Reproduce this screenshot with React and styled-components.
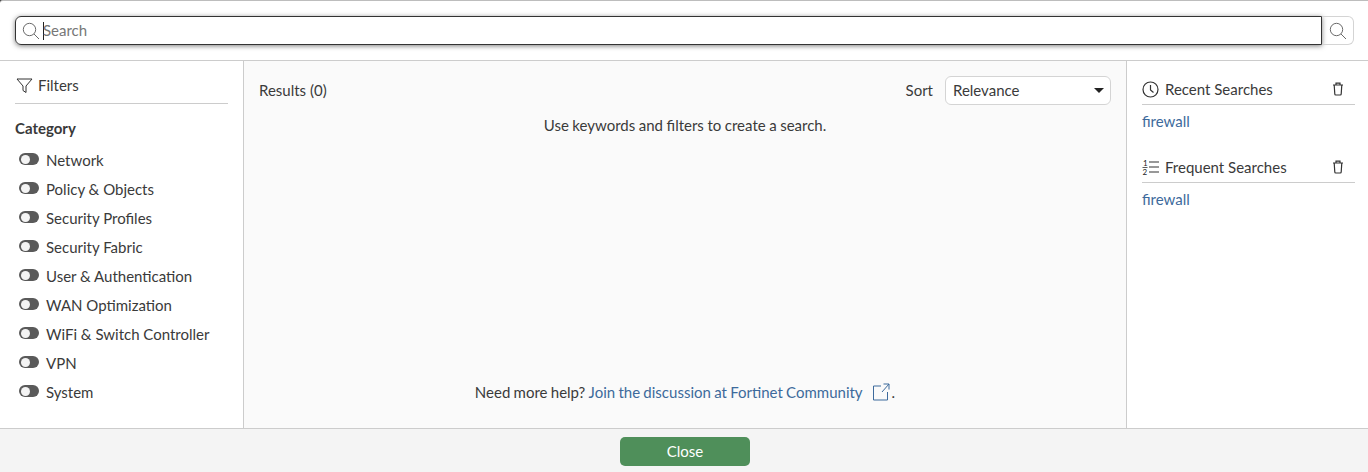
import React from "react";
import styled, { createGlobalStyle } from "styled-components";

const categories = [
  "Network",
  "Policy & Objects",
  "Security Profiles",
  "Security Fabric",
  "User & Authentication",
  "WAN Optimization",
  "WiFi & Switch Controller",
  "VPN",
  "System",
];

const SearchIcon = ({ size = 18 }) => (
  <svg width={size} height={size} viewBox="0 0 18 18" fill="none" stroke="#6a6a6a" strokeWidth="1">
    <circle cx="7.5" cy="7.5" r="6.2" />
    <path d="M12 12l5 5" />
  </svg>
);

const TrashIcon = () => (
  <svg width="12" height="14" viewBox="0 0 12 14" fill="none" stroke="#333" strokeWidth="1.2">
    <path d="M1 3h10M4 3V1.2h4V3M2.2 3l.6 9c0 .6.4 1 1 1h4.400c.6 0 1-.4 1-1l.6-9" />
  </svg>
);

export default function App() {
  return (
    <Page>
      <GlobalStyle />
      <SearchBar>
        <SearchField>
          <FieldIcon>
            <SearchIcon />
          </FieldIcon>
          <Caret />
          <Placeholder>Search</Placeholder>
        </SearchField>
        <SearchButton>
          <SearchIcon />
        </SearchButton>
      </SearchBar>
      <Body>
        <Sidebar>
          <FiltersHead>
            <svg width="17" height="17" viewBox="0 0 17 17" fill="none" stroke="#333" strokeWidth="1">
              <path d="M1 2h15l-6 7v6.500l-3-2V9z" />
            </svg>
            Filters
          </FiltersHead>
          <CategoryTitle>Category</CategoryTitle>
          <CategoryList>
            {categories.map((name) => (
              <CategoryRow key={name}>
                <Toggle />
                {name}
              </CategoryRow>
            ))}
          </CategoryList>
        </Sidebar>
        <Main>
          <ResultsBar>
            <ResultsLabel>Results (0)</ResultsLabel>
            <SortGroup>
              <ResultsLabel>Sort</ResultsLabel>
              <SortSelect>
                <ResultsLabel>Relevance</ResultsLabel>
                <Arrow />
              </SortSelect>
            </SortGroup>
          </ResultsBar>
          <Hint>Use keywords and filters to create a search.</Hint>
          <Help>
            Need more help? <Link>Join the discussion at Fortinet Community</Link>
            <ExternalIcon width="18" height="18" viewBox="0 0 18 18" fill="none" stroke="#3d6a9c" strokeWidth="1">
              <path d="M9 3H1.500v14h14V9M10 9l7-8M11.500 1H17v5.500" />
            </ExternalIcon>
            .
          </Help>
        </Main>
        <Aside>
          <AsideHead>
            <AsideTitle>
              <svg width="17" height="17" viewBox="0 0 17 17" fill="none" stroke="#333" strokeWidth="1.200">
                <circle cx="8.500" cy="8.500" r="7.500" />
                <path d="M8.500 4v5l3 2.500" />
              </svg>
              Recent Searches
            </AsideTitle>
            <TrashIcon />
          </AsideHead>
          <AsideLink>firewall</AsideLink>
          <AsideHead $spaced>
            <AsideTitle>
              <svg width="17" height="17" viewBox="0 0 17 17" fill="none">
                <path d="M7 3h10M7 8h10M7 13h10" stroke="#777" strokeWidth="1.600" />
                <path d="M0.500 8.500h5" stroke="#333" strokeWidth="0.800" />
                <text x="1" y="7" fontSize="8" fontFamily="Lato" fill="#222">1</text>
                <text x="0.500" y="16" fontSize="8" fontFamily="Lato" fill="#222">2</text>
              </svg>
              Frequent Searches
            </AsideTitle>
            <TrashIcon />
          </AsideHead>
          <AsideLink>firewall</AsideLink>
        </Aside>
      </Body>
      <Footer>
        <CloseButton>Close</CloseButton>
      </Footer>
    </Page>
  );
}

const GlobalStyle = createGlobalStyle`
  html, body {
    margin: 0;
    padding: 0;
    background: #444;
  }
`;

const Page = styled.div`
  width: 1368px;
  height: 472px;
  box-sizing: border-box;
  display: flex;
  flex-direction: column;
  background: #fff;
  border-top: 1px solid #bdbdbd;
  border-top-left-radius: 3px;
  font-family: Lato, "Liberation Sans", sans-serif;
  font-size: 15px;
  color: #3a3a3a;
  overflow: hidden;
`;

const SearchBar = styled.div`
  height: 60px;
  flex: none;
  box-sizing: border-box;
  padding: 15px 13px 0 15px;
  display: flex;
  border-bottom: 1px solid #ccc;
`;

const SearchField = styled.div`
  width: 1307px;
  height: 29px;
  box-sizing: border-box;
  display: flex;
  align-items: center;
  border: 1px solid #333;
  border-radius: 6px 0 0 6px;
  box-shadow: 0 1px 5px rgba(0, 0, 0, 0.5);
`;

const FieldIcon = styled.span`
  display: flex;
  margin: 1px 0 0 6px;
`;

const Caret = styled.span`
  width: 1px;
  height: 18px;
  margin-left: 3px;
  background: #222;
`;

const Placeholder = styled.span`
  margin: -2px 0 0 -1px;
  color: #777;
`;

const SearchButton = styled.div`
  width: 32px;
  height: 29px;
  box-sizing: border-box;
  display: flex;
  align-items: center;
  justify-content: center;
  border: 1px solid #d4d4d4;
  border-left: none;
  border-radius: 0 6px 6px 0;
`;

const Body = styled.div`
  flex: 1;
  min-height: 0;
  display: flex;
`;

const Sidebar = styled.div`
  width: 244px;
  flex: none;
  box-sizing: border-box;
  padding: 15px 15px 0 15px;
  border-right: 1px solid #ccc;
`;

const FiltersHead = styled.div`
  display: flex;
  align-items: center;
  gap: 5px;
  height: 28px;
  box-sizing: border-box;
  padding: 0 1px 9px;
  border-bottom: 1px solid #ccc;
`;

const CategoryTitle = styled.div`
  margin-top: 14px;
  font-weight: 700;
  line-height: 20px;
`;

const CategoryList = styled.div`
  margin-top: 7px;
`;

const CategoryRow = styled.div`
  display: flex;
  align-items: center;
  gap: 7px;
  height: 29px;
  padding-left: 4px;
`;

const Toggle = styled.span`
  position: relative;
  width: 20px;
  height: 12px;
  margin-top: -1px;
  border-radius: 6px;
  background: #5a5a5a;

  &::after {
    content: "";
    position: absolute;
    left: 2px;
    top: 1.5px;
    width: 9px;
    height: 9px;
    border-radius: 50%;
    background: #f4f4f4;
  }
`;

const Main = styled.div`
  flex: 1;
  min-width: 0;
  display: flex;
  flex-direction: column;
  box-sizing: border-box;
  padding: 15px 15px 25px;
  background: #fafafa;
`;

const ResultsBar = styled.div`
  display: flex;
  align-items: center;
  justify-content: space-between;
  height: 29px;
`;

const ResultsLabel = styled.span`
  position: relative;
  top: -1px;
`;

const SortGroup = styled.div`
  display: flex;
  align-items: center;
  gap: 12px;
`;

const SortSelect = styled.div`
  width: 166px;
  height: 29px;
  box-sizing: border-box;
  display: flex;
  align-items: center;
  justify-content: space-between;
  padding: 0 6px 0 7px;
  background: #fff;
  border: 1px solid #d4d4d4;
  border-radius: 6px;
`;

const Arrow = styled.span`
  width: 0;
  height: 0;
  border-left: 5px solid transparent;
  border-right: 5px solid transparent;
  border-top: 5px solid #222;
`;

const Hint = styled.div`
  margin-top: 10px;
  text-align: center;
  line-height: 20px;
  word-spacing: -0.3px;
`;

const Help = styled.div`
  margin-top: auto;
  display: flex;
  justify-content: center;
  align-items: center;
  white-space: pre;
  line-height: 20px;
  word-spacing: -0.55px;
  position: relative;
  top: -1px;
`;

const Link = styled.a`
  color: #3d6a9c;
`;

const ExternalIcon = styled.svg`
  margin: 0 2px 0 9px;
`;

const Aside = styled.div`
  width: 242px;
  flex: none;
  box-sizing: border-box;
  padding: 15px 13px 0 15px;
  border-left: 1px solid #ccc;
`;

const AsideHead = styled.div`
  display: flex;
  align-items: center;
  justify-content: space-between;
  height: 29px;
  box-sizing: border-box;
  padding: 0 11px 2px 0;
  border-bottom: 1px solid #ccc;
  margin-top: ${(p) => (p.$spaced ? "23px" : "0")};
`;

const AsideTitle = styled.div`
  display: flex;
  align-items: center;
  gap: 6px;
`;

const AsideLink = styled.a`
  display: block;
  margin-top: 6px;
  line-height: 20px;
  color: #3d6a9c;
`;

const Footer = styled.div`
  height: 44px;
  flex: none;
  box-sizing: border-box;
  display: flex;
  justify-content: center;
  padding: 8px 0 0 2px;
  background: #f4f4f4;
  border-top: 1px solid #ccc;
`;

const CloseButton = styled.div`
  width: 130px;
  height: 29px;
  box-sizing: border-box;
  padding-bottom: 2px;
  display: flex;
  align-items: center;
  justify-content: center;
  border-radius: 5px;
  background: #4f8f5a;
  color: #fff;
`;
